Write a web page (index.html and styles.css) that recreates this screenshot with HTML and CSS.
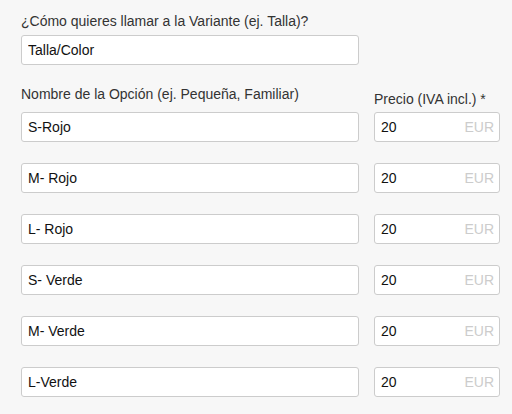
FILE: index.html
```html
<!DOCTYPE html>
<html lang="es">
<head>
    <meta charset="UTF-8">
    <meta name="viewport" content="width=device-width, initial-scale=1.0">
    <title>Variantes</title>
    <link rel="stylesheet" href="styles.css">
</head>
<body>
    <div class="variant-form">
        <!-- Nombre de la variante -->
        <div class="variant-name">
            <label class="field-label" for="variant">¿Cómo quieres llamar a la Variante (ej. Talla)?</label>
            <input class="text-input" id="variant" type="text" value="Talla/Color">
        </div>

        <!-- Cabecera de las opciones -->
        <div class="options-head">
            <label class="field-label">Nombre de la Opción (ej. Pequeña, Familiar)</label>
            <label class="field-label price-label">Precio (IVA incl.) *</label>
        </div>

        <!-- Opciones con precio -->
        <div class="options">
            <input class="text-input" type="text" value="S-Rojo">
            <div class="price-box"><input class="price-input" type="text" value="20"><span class="currency">EUR</span></div>

            <input class="text-input" type="text" value="M- Rojo">
            <div class="price-box"><input class="price-input" type="text" value="20"><span class="currency">EUR</span></div>

            <input class="text-input" type="text" value="L- Rojo">
            <div class="price-box"><input class="price-input" type="text" value="20"><span class="currency">EUR</span></div>

            <input class="text-input" type="text" value="S- Verde">
            <div class="price-box"><input class="price-input" type="text" value="20"><span class="currency">EUR</span></div>

            <input class="text-input" type="text" value="M- Verde">
            <div class="price-box"><input class="price-input" type="text" value="20"><span class="currency">EUR</span></div>

            <input class="text-input" type="text" value="L-Verde">
            <div class="price-box"><input class="price-input" type="text" value="20"><span class="currency">EUR</span></div>
        </div>
    </div>
</body>
</html>
```

FILE: styles.css
```css
body {
    margin: 0;
    padding: 13px 12px 0 21px;
    background-color: #f7f7f7;
    font-family: 'Liberation Sans', Arial, sans-serif;
    color: #333;
}

.field-label {
    display: block;
    font-size: 14px;
    line-height: 16px;
    color: #333;
}

.variant-name .field-label {
    margin-bottom: 6px;
}

.text-input {
    box-sizing: border-box;
    display: block;
    width: 338px;
    height: 30px;
    margin: 0;
    padding: 0 6px;
    border: 1px solid #ccc;
    border-radius: 3px;
    background: #fff;
    font-family: inherit;
    font-size: 14px;
    color: #111;
    outline: none;
}

.options-head,
.options {
    display: grid;
    grid-template-columns: 338px 126px;
    column-gap: 15px;
}

.options-head {
    height: 21px;
    margin: 21px 0 5px;
}

.price-label {
    padding-top: 5px;
}

.options {
    row-gap: 21px;
}

.price-box {
    box-sizing: border-box;
    display: flex;
    align-items: center;
    height: 30px;
    padding: 0 5px 0 6px;
    border: 1px solid #ccc;
    border-radius: 3px;
    background: #fff;
}

.price-input {
    flex: 1;
    min-width: 0;
    padding: 0;
    border: none;
    background: transparent;
    font-family: inherit;
    font-size: 14px;
    color: #111;
    outline: none;
}

.currency {
    font-size: 14px;
    color: #ccc;
}
```
